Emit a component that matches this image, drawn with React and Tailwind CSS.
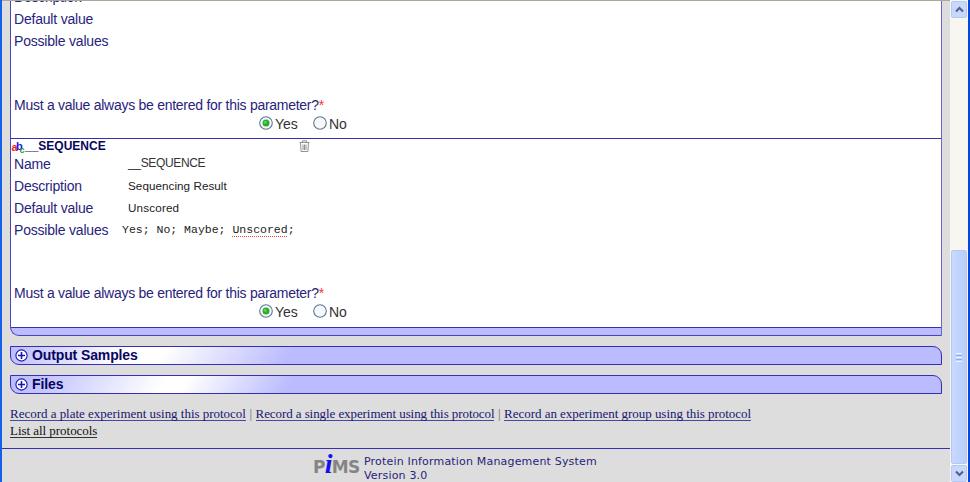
const labelText = "text-[14px] text-[#28237c] whitespace-nowrap";

function Row({ label, children }) {
  return (
    <div className="flex h-[22px] items-center pl-[3px]">
      <span className={`${labelText} w-[114px] leading-[22px] tracking-[-0.2px]`}>{label}</span>
      {children}
    </div>
  );
}

function Radio({ checked }) {
  return (
    <svg width="14" height="14" viewBox="0 0 14 14" className="shrink-0">
      <circle cx="7" cy="7" r="6.3" fill="#f7f8f7" stroke="#54799f" strokeWidth="1.1" />
      {checked && <circle cx="7" cy="7" r="3.5" fill="#2aae2a" />}
      {checked && <circle cx="6.2" cy="6.2" r="1.5" fill="#5cd05c" />}
    </svg>
  );
}

function Required() {
  return (
    <div>
      <div className={`${labelText} h-[19px] pl-[3px] leading-5 tracking-[-0.27px]`}>
        Must a value always be entered for this parameter?<span className="text-[#ff3030]">*</span>
      </div>
      <div className="flex h-[18px] items-center pl-[248px] text-[14px] leading-[18px] tracking-[-0.1px] text-[#333]">
        <Radio checked />
        <span className="ml-[2px] w-[38px] pt-[2px]">Yes</span>
        <Radio />
        <span className="ml-[2px] pt-[2px]">No</span>
      </div>
    </div>
  );
}

function Trash() {
  return (
    <svg width="11" height="12" viewBox="0 0 11 12" fill="none" stroke="#858585">
      <path d="M.5 2.5h10M3.5 2V.8h4V2M1.5 3l.6 8.5h6.8L9.5 3M4 4.5V10M5.5 4.5V10M7 4.5V10" strokeWidth=".9" />
    </svg>
  );
}

function Bar({ title, fill }) {
  return (
    <div className={`flex h-[19px] w-[932px] items-center rounded-bl-[9px] rounded-tr-[9px] border border-[#3430b0] pl-1 ${fill}`}>
      <svg width="13" height="13" viewBox="0 0 13 13" fill="#fff" stroke="#1a15b0">
        <circle cx="6.5" cy="6.5" r="5.6" strokeWidth="1.1" />
        <path d="M6.5 3v7M3 6.5h7" strokeWidth="1.6" />
      </svg>
      <span className="ml-1 text-[14px] font-bold leading-[17px] tracking-[-0.12px] text-[#08055f]">{title}</span>
    </div>
  );
}

function ScrollButton({ down }) {
  return (
    <div className="flex h-[17px] w-[16px] items-center justify-center rounded-[2px] border border-[#b5c8f5] bg-[#c8d7fb]">
      <svg width="9" height="7" viewBox="0 0 9 7" fill="none" stroke="#4d6185" strokeWidth="2">
        <path d={down ? "M1 1.5l3.5 3.5L8 1.5" : "M1 5.5L4.5 2 8 5.5"} />
      </svg>
    </div>
  );
}

function Scrollbar() {
  return (
    <div className="flex w-[18px] flex-col items-end bg-[#f8f6f0] pr-px pt-px">
      <ScrollButton />
      <div className="h-[232px]" />
      <div className="flex h-[214px] w-[16px] flex-col items-center justify-center gap-px rounded-[2px] border border-[#b3c8f5] bg-linear-to-r from-[#c9d9ff] to-[#b9cefb]">
        <i className="h-px w-[6px] bg-[#eef4fe]" />
        <i className="h-px w-[6px] bg-[#8cb0f8]" />
        <i className="h-px w-[6px] bg-[#eef4fe]" />
        <i className="h-px w-[6px] bg-[#8cb0f8]" />
        <i className="h-px w-[6px] bg-[#eef4fe]" />
      </div>
      <div className="h-px" />
      <ScrollButton down />
    </div>
  );
}

const link = "border-b border-[#4a47a0] text-[#1a1570] h-[15px]";

export default function App() {
  return (
    <div className="flex h-[482px] w-[970px] overflow-hidden border-l-2 border-r-2 border-l-[#1460e8] border-r-[#0a45dd] bg-[#ddd] font-['Liberation_Sans',Arial,sans-serif]">
      <div className="flex w-[948px] flex-col border-t border-[#aca899]">
        <div className="ml-2 h-[335px] w-[932px] shrink-0 overflow-hidden rounded-bl-[9px] border border-t-0 border-b-[#4a46b4] border-l-[#4a46b4] border-r-[#6a68c4] bg-[#bbbbff]">
          <div className="h-[138px] overflow-hidden border-b border-[#3430b0] bg-white">
            <div className="-mt-[15px]">
              <Row label="Description" />
              <Row label="Default value" />
              <Row label="Possible values" />
            </div>
            <div className="h-[43px]" />
            <Required />
          </div>
          <div className="h-[189px] border-b border-[#3430b0] bg-white">
            <div className="flex h-[14px] items-center">
              <svg width="14" height="14" viewBox="0 0 14 14" className="overflow-visible font-bold">
                <text x="0.5" y="11.5" fontSize="11" fill="#f01818">a</text>
                <text x="5" y="10.5" fontSize="11" fill="#1515e8">b</text>
                <text x="8.5" y="13.5" fontSize="9" fill="#129a28">c</text>
              </svg>
              <span className="w-[274px] text-[12px] font-bold leading-[14px] text-[#08055f]">__SEQUENCE</span>
              <Trash />
            </div>
            <Row label="Name"><span className="text-[12px] leading-[20px] tracking-[-0.35px] text-[#333] pb-[2px]">__SEQUENCE</span></Row>
            <Row label="Description"><span className="text-[11.7px] tracking-[0.04px] text-[#222]">Sequencing Result</span></Row>
            <Row label="Default value"><span className="text-[11.7px] tracking-[0.15px] text-[#222]">Unscored</span></Row>
            <Row label="Possible values">
              <span className="-ml-[6px] whitespace-nowrap font-['Liberation_Mono',monospace] text-[11.5px] text-[#222]">
                Yes; No; Maybe; <span className="underline decoration-dotted decoration-[#f04050] decoration-1 underline-offset-[3px]">Unscored</span>;
              </span>
            </Row>
            <div className="h-[42px]" />
            <Required />
          </div>
        </div>
        <div className="ml-2 mt-[10px] flex flex-col gap-[10px]">
          <Bar title="Output Samples" fill="bg-[linear-gradient(120deg,#bbbbff_0,#ffffff_100px,#ffffff_135px,#bbbbff_245px)]" />
          <Bar title="Files" fill="bg-[linear-gradient(120deg,#bbbbff_0,#c4c4ff_30px,#ffffff_135px,#ffffff_155px,#bbbbff_245px)]" />
        </div>
        <div className="ml-2 mt-3 whitespace-nowrap font-['Liberation_Serif',serif] text-[13px] leading-[16px]">
          <div className="flex h-[17px] items-start gap-[3.5px]">
            <span className={`${link} tracking-[-0.02px]`}>Record a plate experiment using this protocol</span>
            <span className="text-[#666]">|</span>
            <span className={`${link} tracking-[-0.08px]`}>Record a single experiment using this protocol</span>
            <span className="text-[#666]">|</span>
            <span className={`${link} tracking-[-0.03px]`}>Record an experiment group using this protocol</span>
          </div>
          <span className="inline-block h-[15px] border-b border-[#333] tracking-[-0.04px] text-[#111]">List all protocols</span>
        </div>
        <div className="mt-auto flex h-[34px] shrink-0 border-t border-[#3430b0] pl-[311px]">
          <div className="flex h-[30px] w-[51px] items-baseline pt-[3px] font-['DejaVu_Sans',sans-serif] text-[17px] font-bold leading-[24px] tracking-[-0.7px] text-[#858585]">
            <span>P</span>
            <span className="font-['Liberation_Serif',serif] text-[28px] italic text-[#1010f0]">i</span>
            <span>MS</span>
          </div>
          <div className="whitespace-nowrap pt-[6px] font-['DejaVu_Sans',Verdana,sans-serif] text-[11px] leading-[14px] tracking-[0.18px] text-[#28237c]">
            <div>Protein Information Management System</div>
            <div>Version 3.0</div>
          </div>
        </div>
      </div>
      <Scrollbar />
    </div>
  );
}
